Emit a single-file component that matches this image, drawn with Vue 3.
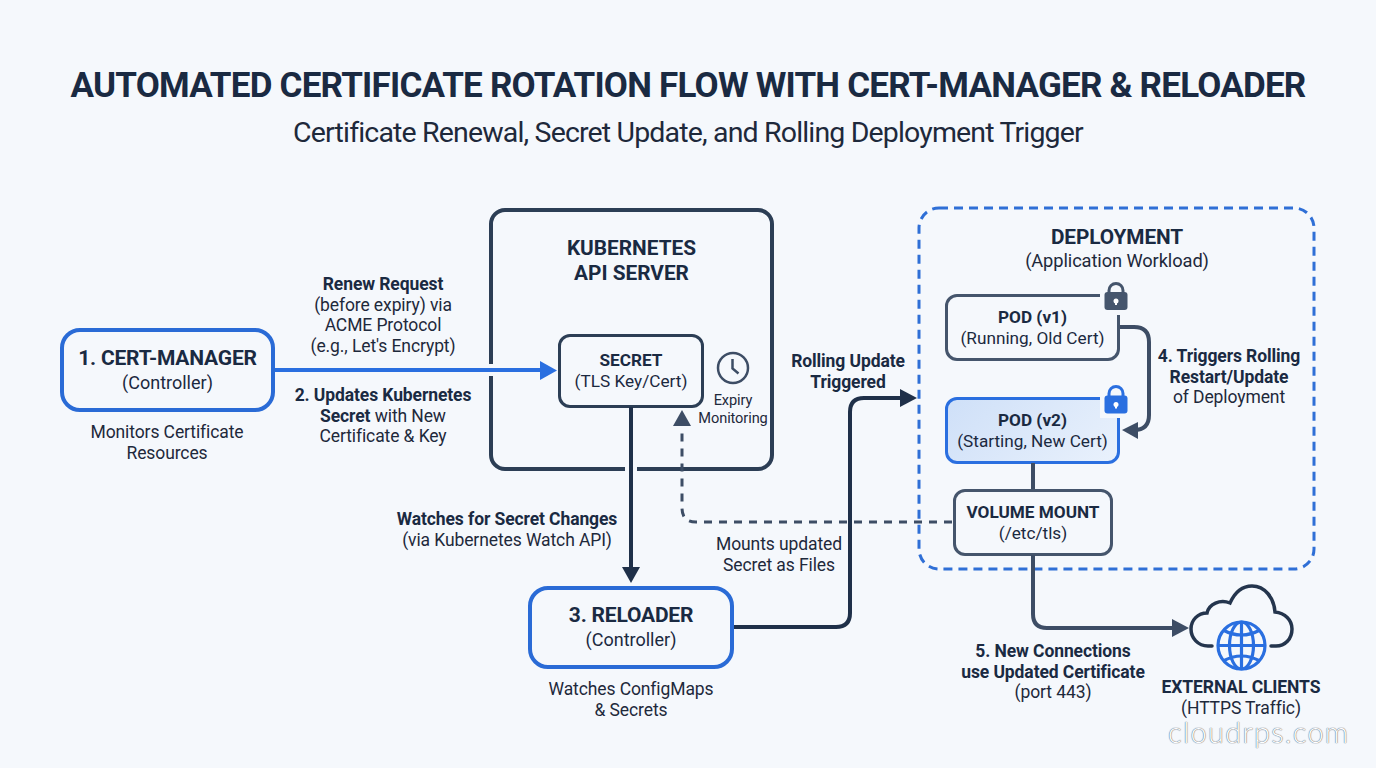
<template>
  <div class="page">
    <header class="header">
      <h1>AUTOMATED CERTIFICATE ROTATION FLOW WITH CERT-MANAGER &amp; RELOADER</h1>
      <p>Certificate Renewal, Secret Update, and Rolling Deployment Trigger</p>
    </header>

    <main class="diagram">
      <div class="node api-server">
        <b>KUBERNETES<br />API SERVER</b>
      </div>
      <div class="node controller cert-manager">
        <b>1. CERT-MANAGER</b>
        <span>(Controller)</span>
      </div>
      <div class="node controller reloader">
        <b>3. RELOADER</b>
        <span>(Controller)</span>
      </div>
      <div class="node small secret">
        <b>SECRET</b>
        <span>(TLS Key/Cert)</span>
      </div>
      <div class="node small pod pod-v1">
        <b>POD (v1)</b>
        <span>(Running, Old Cert)</span>
      </div>
      <div class="node small pod pod-v2">
        <b>POD (v2)</b>
        <span>(Starting, New Cert)</span>
      </div>
      <div class="node small volume">
        <b>VOLUME MOUNT</b>
        <span>(/etc/tls)</span>
      </div>

      <svg class="wires" viewBox="0 170 1376 598" fill="none">
        <!-- gaps in the box borders where the arrows pass -->
        <path class="halo" d="M482 370H500M631 462V478" />
        <rect class="cover" x="1100" y="280" width="31" height="35" />
        <rect class="cover" x="1100" y="383" width="31" height="35" />

        <!-- deployment frame -->
        <rect class="frame" x="919" y="208" width="395" height="361" rx="20" />

        <!-- blue request arrow -->
        <path class="blue-line" d="M275 370H542" />
        <polygon class="blue-fill" points="540,361 557,370.500 540,380" />

        <!-- watch arrow -->
        <path class="dark-line" d="M631 407V570" />
        <polygon class="dark-fill" points="622,567 640,567 631,583" />

        <!-- rolling update -->
        <path class="dark-line" d="M734 627H836Q850 627 850 613V412Q850 398 864 398H902" />
        <polygon class="dark-fill" points="900,389 917,398 900,407" />

        <!-- volume mount back to secret -->
        <path class="dashed" d="M952 522H696Q682 522 682 508V430" />
        <polygon class="slate-fill" points="682,410 691,426 673,426" />

        <!-- pod to pod -->
        <path class="slate-line" d="M1120 327H1134Q1149 327 1149 342V415Q1149 430 1134 430H1130" />
        <polygon class="slate-fill" points="1122,430 1138,422 1138,439" />
        <path class="slate-line" d="M1033 463V489" />

        <!-- volume to clients -->
        <path class="slate-line" d="M1033 555V614Q1033 628 1047 628H1174" />
        <polygon class="slate-fill" points="1172,619 1189,628 1172,637" />

        <!-- locks -->
        <g class="lock">
          <path d="M1109 294V290.500A7 7 0 0 1 1123 290.500V294" />
          <rect x="1104.500" y="292" width="23" height="18" rx="3" />
          <circle cx="1116" cy="301" r="2.500" />
          <path class="key" d="M1116 301V305" />
        </g>
        <g class="lock lock-blue">
          <path d="M1109 397V393.500A7 7 0 0 1 1123 393.500V397" />
          <rect x="1104.500" y="395.500" width="23" height="18" rx="3" />
          <circle cx="1116" cy="404.500" r="2.500" />
          <path class="key" d="M1116 404.500V408.500" />
        </g>

        <!-- clock -->
        <g class="clock">
          <circle cx="733" cy="368" r="15" />
          <path d="M732.500 359V368.500L738.500 373.500" />
        </g>

        <!-- cloud and globe -->
        <path
          class="cloud"
          d="M1212 646H1208C1198 646 1191 638 1191 629C1191 620 1198 613 1207 613C1209 604 1220 599 1230 603C1235 592 1243 586 1252 586C1265 586 1274 598 1275 612C1285 613 1292 620 1292 629C1292 639 1285 646 1276 646H1271"
        />
        <g class="globe">
          <circle cx="1241.500" cy="645.500" r="23.500" />
          <ellipse cx="1241.500" cy="645.500" rx="12" ry="23.500" />
          <path d="M1241.500 622V669M1218 645.500H1265" />
          <path d="M1223 630Q1241.500 640 1260 630M1223 661Q1241.500 651 1260 661" />
        </g>
      </svg>

      <div class="label renew">
        <b>Renew Request</b><br />(before expiry) via<br />ACME Protocol<br />(e.g., Let's Encrypt)
      </div>
      <div class="label updates">
        <b>2. Updates Kubernetes<br />Secret</b> with New<br />Certificate &amp; Key
      </div>
      <div class="label monitors">Monitors Certificate<br />Resources</div>
      <div class="label expiry">Expiry<br />Monitoring</div>
      <div class="label watches"><b>Watches for Secret Changes</b><br />(via Kubernetes Watch API)</div>
      <div class="label configmaps">Watches ConfigMaps<br />&amp; Secrets</div>
      <div class="label rolling"><b>Rolling Update<br />Triggered</b></div>
      <div class="label mounts">Mounts updated<br />Secret as Files</div>
      <div class="label deployment">
        <b>DEPLOYMENT</b><br />(Application Workload)
      </div>
      <div class="label triggers">
        <b>4. Triggers Rolling<br />Restart/Update</b><br />of Deployment
      </div>
      <div class="label connections">
        <b>5. New Connections<br />use Updated Certificate</b><br />(port 443)
      </div>
      <div class="label clients"><b>EXTERNAL CLIENTS</b><br />(HTTPS Traffic)</div>
      <div class="watermark">cloudrps.com</div>
    </main>
  </div>
</template>

<script setup>
</script>

<style>
html,
body {
  margin: 0;
  background: #f5f8fc;
}
</style>

<style scoped>
.page {
  width: 1376px;
  height: 768px;
  overflow: hidden;
  background: #f5f8fc;
  color: #1b2940;
  font-family: Roboto, "Liberation Sans", sans-serif;
}

.header {
  height: 170px;
  padding-top: 65px;
  box-sizing: border-box;
  text-align: center;
}

.header h1 {
  margin: 0;
  font-size: 35px;
  line-height: 42px;
  font-weight: 700;
  letter-spacing: -0.780px;
  color: #1a2a42;
  white-space: nowrap;
}

.header p {
  margin: 10px 0 0;
  font-size: 28.500px;
  line-height: 32px;
  letter-spacing: -0.840px;
  color: #1e293b;
}

.diagram {
  position: relative;
  height: 598px;
}

.wires {
  position: absolute;
  left: 0;
  top: 0;
  width: 1376px;
  height: 598px;
}

.halo {
  stroke: #f5f8fc;
  stroke-width: 12;
}

.cover {
  fill: #f5f8fc;
}

.frame {
  stroke: #2f6fd6;
  stroke-width: 3;
  stroke-dasharray: 9 6;
}

.blue-line {
  stroke: #2a6fe0;
  stroke-width: 4;
}

.blue-fill {
  fill: #2a6fe0;
}

.dark-line {
  stroke: #1f3049;
  stroke-width: 4;
}

.dark-fill {
  fill: #1f3049;
}

.slate-line {
  stroke: #3d4d65;
  stroke-width: 4;
}

.slate-fill {
  fill: #3d4d65;
}

.dashed {
  stroke: #3d4d65;
  stroke-width: 3;
  stroke-dasharray: 8 7;
}

.lock path {
  stroke: #45556c;
  stroke-width: 3;
}

.lock rect {
  fill: #45556c;
}

.lock-blue path {
  stroke: #2a6fe0;
}

.lock-blue rect {
  fill: #2a6fe0;
}

.lock circle {
  fill: #fff;
}

.lock .key {
  stroke: #fff;
  stroke-width: 2;
}

.clock circle,
.clock path {
  stroke: #3d4d65;
  stroke-width: 2.500;
}

.cloud {
  stroke: #24354d;
  stroke-width: 3.500;
  stroke-linecap: round;
}

.globe circle,
.globe ellipse,
.globe path {
  stroke: #2a6fe0;
  stroke-width: 3.200;
}

.node {
  position: absolute;
  box-sizing: border-box;
  display: flex;
  flex-direction: column;
  align-items: center;
  justify-content: center;
  text-align: center;
}

.node b {
  font-weight: 700;
  color: #1a2a42;
}

.controller {
  border: 4px solid #2a6bd6;
  border-radius: 20px;
}

.controller b {
  font-size: 21px;
  line-height: 25px;
  letter-spacing: -0.200px;
}

.controller span {
  font-size: 18px;
  line-height: 23px;
}

.cert-manager {
  left: 60px;
  top: 158px;
  width: 215px;
  height: 84px;
}

.reloader {
  left: 528px;
  top: 416px;
  width: 206px;
  height: 83px;
  padding-bottom: 2px;
}

.api-server {
  left: 489px;
  top: 38px;
  width: 285px;
  height: 263px;
  justify-content: flex-start;
  padding-top: 24px;
  border: 4px solid #2c3e55;
  border-radius: 16px;
}

.api-server b {
  font-size: 20.800px;
  line-height: 25px;
}

.small {
  border: 3px solid #2c3e55;
  border-radius: 12px;
}

.small b,
.small span {
  font-size: 17.200px;
  line-height: 21px;
}

.secret {
  left: 558px;
  top: 164px;
  width: 146px;
  height: 74px;
}

.pod {
  border-color: #45556c;
}

.pod-v1 {
  left: 945px;
  top: 124px;
  width: 175px;
  height: 67px;
}

.pod-v2 {
  left: 945px;
  top: 227px;
  width: 175px;
  height: 67px;
  border-color: #2a6fe0;
  background: linear-gradient(135deg, #cfe0f8, #e9f1fc);
}

.volume {
  left: 953px;
  top: 319px;
  width: 160px;
  height: 67px;
  border-color: #45556c;
}

.label {
  position: absolute;
  transform: translateX(-50%);
  text-align: center;
  white-space: nowrap;
  font-size: 17.500px;
  line-height: 20.500px;
  letter-spacing: -0.100px;
  color: #1e293b;
}

.label b {
  font-weight: 700;
  color: #1a2a42;
}

.renew {
  left: 383px;
  top: 104px;
}

.updates {
  left: 383px;
  top: 215px;
}

.monitors {
  left: 167px;
  top: 252px;
}

.expiry {
  left: 733px;
  top: 221px;
  font-size: 14.600px;
  line-height: 18px;
}

.watches {
  left: 507px;
  top: 339px;
}

.configmaps {
  left: 631px;
  top: 509px;
}

.rolling {
  left: 848px;
  top: 181px;
}

.mounts {
  left: 779px;
  top: 364px;
}

.deployment {
  left: 1117px;
  top: 56px;
  font-size: 18.300px;
  line-height: 23px;
}

.deployment b {
  font-size: 20.800px;
}

.triggers {
  left: 1229px;
  top: 176px;
}

.connections {
  left: 1053px;
  top: 471px;
}

.clients {
  left: 1241px;
  top: 507px;
}

.watermark {
  position: absolute;
  left: 1168px;
  top: 551px;
  font-family: Lato, "Open Sans", sans-serif;
  font-size: 29px;
  line-height: 22px;
  font-weight: 300;
  letter-spacing: 1.250px;
  color: #ffffff;
  text-shadow: 0 0 1px #5f6975, 0 0 1px #5f6975;
}
</style>
